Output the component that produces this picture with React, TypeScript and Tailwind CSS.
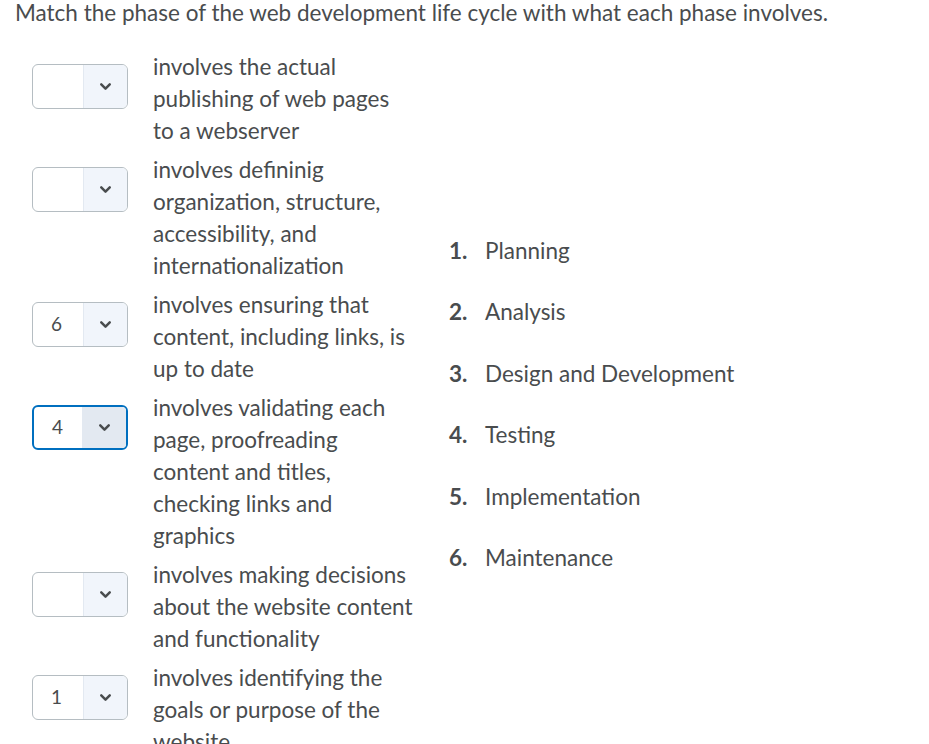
import { ChevronDown } from "lucide-react";

type Row = { value: string; lines: string; focused?: boolean };

const rows: Row[] = [
  { value: "", lines: "involves the actual publishing of web pages to a webserver" },
  {
    value: "",
    lines: "involves defininig organization, structure, accessibility, and internationalization",
  },
  { value: "6", lines: "involves ensuring that content, including links, is up to date" },
  {
    value: "4",
    lines: "involves validating each page, proofreading content and titles, checking links and graphics",
    focused: true,
  },
  { value: "", lines: "involves making decisions about the website content and functionality" },
  { value: "1", lines: "involves identifying the goals or purpose of the website" },
];

const phases = ["Planning", "Analysis", "Design and Development", "Testing", "Implementation", "Maintenance"];

function MatchSelect({ value, focused }: { value: string; focused?: boolean }) {
  return (
    <div
      className={`mt-[13px] flex h-[45px] w-[96px] shrink-0 overflow-hidden rounded-[6px] bg-white ${
        focused ? "border-2 border-[#006fbf]" : "border border-[#b5bdc2]"
      }`}
    >
      <span className="flex flex-1 items-center pl-[18px] text-[19px] text-[#494c4e]">{value}</span>
      <span
        className={`flex w-[44px] items-center justify-center border-l border-[#e3e9f1] ${
          focused ? "bg-[#e3e9f1]" : "bg-[#f1f5fb]"
        }`}
      >
        <ChevronDown size={17} strokeWidth={3.5} className="text-[#494c4e]" />
      </span>
    </div>
  );
}

export default function App() {
  return (
    <div className="min-h-screen bg-white font-['Lato',sans-serif] text-[#494c4e]">
      <h1 className="pl-[15px] text-[22.5px] leading-[26px] font-normal">
        Match the phase of the web development life cycle with what each phase involves.
      </h1>
      <div className="flex items-center pl-[32px] pt-[25px]">
        <div className="flex flex-col gap-[7px]">
          {rows.map((r, i) => (
            <div key={i} className="flex gap-[25px]">
              <MatchSelect value={r.value} focused={r.focused} />
              <p className="w-[261px] text-[22.5px] leading-[32px]">{r.lines}</p>
            </div>
          ))}
        </div>
        <ol className="ml-[35px] flex flex-col gap-[29.6px]">
          {phases.map((p, i) => (
            <li key={p} className="flex text-[22.5px] leading-[32px]">
              <span className="w-[36px] font-bold">{i + 1}.</span>
              <span>{p}</span>
            </li>
          ))}
        </ol>
      </div>
    </div>
  );
}
